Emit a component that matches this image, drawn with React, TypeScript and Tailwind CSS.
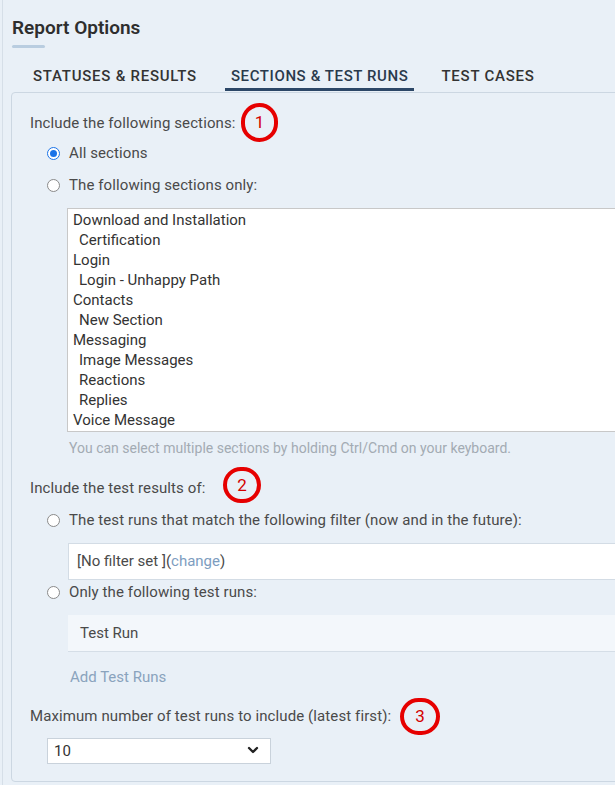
import React from "react";
import { ChevronDown } from "lucide-react";

function Radio({ checked }: { checked?: boolean }) {
  if (checked) {
    return (
      <span className="flex h-[13px] w-[13px] shrink-0 items-center justify-center rounded-full border-[1.5px] border-[#1a73e8] bg-white">
        <span className="h-[7px] w-[7px] rounded-full bg-[#1a73e8]" />
      </span>
    );
  }
  return <span className="h-[13px] w-[13px] shrink-0 rounded-full border border-[#8a8a8a] bg-white" />;
}

function RadioRow({ checked, label, className }: { checked?: boolean; label: string; className?: string }) {
  return (
    <div className={"ml-[17px] flex h-[20px] items-center gap-[9px] " + (className ?? "")}>
      <Radio checked={checked} />
      <span className="text-[15px] leading-[20px] tracking-[0.1px] text-[#4a4a4a]">{label}</span>
    </div>
  );
}

function Marker({ n, className }: { n: string; className: string }) {
  return (
    <div
      className={
        "absolute flex items-center justify-center rounded-full border-[4px] border-[#e60000] text-[17px] leading-none text-[#d40000] " +
        className
      }
    >
      {n}
    </div>
  );
}

const sections: [string, boolean][] = [
  ["Download and Installation", false],
  ["Certification", true],
  ["Login", false],
  ["Login - Unhappy Path", true],
  ["Contacts", false],
  ["New Section", true],
  ["Messaging", false],
  ["Image Messages", true],
  ["Reactions", true],
  ["Replies", true],
  ["Voice Message", false],
];

const label = "text-[15px] leading-[20px] tracking-[0.1px] text-[#4a4a4a]";

export default function App() {
  return (
    <div
      className="relative h-[785px] w-[615px] overflow-hidden bg-[#e9f0f7]"
      style={{ fontFamily: "Roboto, 'Liberation Sans', sans-serif" }}
    >
      <div className="ml-[2px] h-full border-l border-[#d6dfe8]">
        <div className="pl-[9px] pt-[16px]">
          <div className="text-[19px] font-semibold leading-[24px] text-[#2e2e2e]">Report Options</div>
          <div className="mt-[5px] h-[3px] w-[33px] rounded-full bg-[#b9cde0]" />
        </div>

        <div className="ml-[24px] flex h-[44px] items-start gap-[22px] pt-[18px]">
          <div className="px-[6px] text-[15px] font-medium uppercase leading-[20px] tracking-[0.05em] text-[#333]">
            Statuses &amp; Results
          </div>
          <div className="px-[6px] text-[15px] font-medium uppercase leading-[20px] tracking-[0.04em] text-[#2a3a4c]">
            Sections &amp; Test Runs
          </div>
          <div className="px-[5px] text-[15px] font-medium uppercase leading-[20px] tracking-[0.05em] text-[#333]">
            Test Cases
          </div>
        </div>

        <div className="ml-[8px] w-[640px] rounded-[4px] border border-[#ccd7e2] bg-[#e9f0f7] pb-[17px] pl-[18px] pt-[20px]">
          <div className={label}>Include the following sections:</div>
          <RadioRow checked label="All sections" className="mt-[10px]" />
          <RadioRow label="The following sections only:" className="mt-[12px]" />

          <div className="ml-[37px] mt-[13px] border border-[#c8c8c8] bg-white py-[1px] pl-[5px]">
            {sections.map(([s, indent]) => (
              <div key={s} className={"text-[15px] leading-[20px] text-[#333] " + (indent ? "pl-[6px]" : "")}>
                {s}
              </div>
            ))}
          </div>
          <div className="ml-[39px] mt-[6px] text-[14px] leading-[20px] text-[#a3abb3]">
            You can select multiple sections by holding Ctrl/Cmd on your keyboard.
          </div>

          <div className={"mt-[20px] " + label}>Include the test results of:</div>
          <RadioRow label="The test runs that match the following filter (now and in the future):" className="mt-[12px]" />
          <div className="ml-[38px] mt-[13px] flex h-[37px] items-center border border-[#d3dce5] bg-white pl-[8px] text-[15px] text-[#4a4a4a]">
            <span>[No filter set ]</span>
            <span>
              (<span className="text-[#7d9dbf]">change</span>)
            </span>
          </div>
          <RadioRow label="Only the following test runs:" className="mt-[2px]" />
          <div className="ml-[38px] mt-[13px] flex h-[37px] items-center border-b border-[#d5dee7] bg-[#f3f7fb] pl-[12px] text-[15px] text-[#4a4a4a]">
            Test Run
          </div>
          <div className="ml-[40px] mt-[15px] text-[15px] leading-[20px] text-[#8aa3bd]">Add Test Runs</div>

          <div className={"mt-[19px] " + label}>Maximum number of test runs to include (latest first):</div>
          <div className="ml-[17px] mt-[12px] flex h-[26px] w-[224px] items-end justify-between border border-[#c9d2db] bg-white pb-[2px] pl-[6px] pr-[9px]">
            <span className="text-[15px] leading-[20px] text-[#333]">10</span>
            <ChevronDown size={16} strokeWidth={3.5} className="mb-[3px] text-[#222]" />
          </div>
        </div>
      </div>

      <div className="absolute left-[225px] top-[88px] h-[3px] w-[189px] bg-[#2c4767]" />

      <Marker n="1" className="left-[241px] top-[103px] h-[39px] w-[37px]" />
      <Marker n="2" className="left-[223px] top-[467px] h-[36px] w-[38px]" />
      <Marker n="3" className="left-[400px] top-[698px] h-[37px] w-[40px]" />
    </div>
  );
}
